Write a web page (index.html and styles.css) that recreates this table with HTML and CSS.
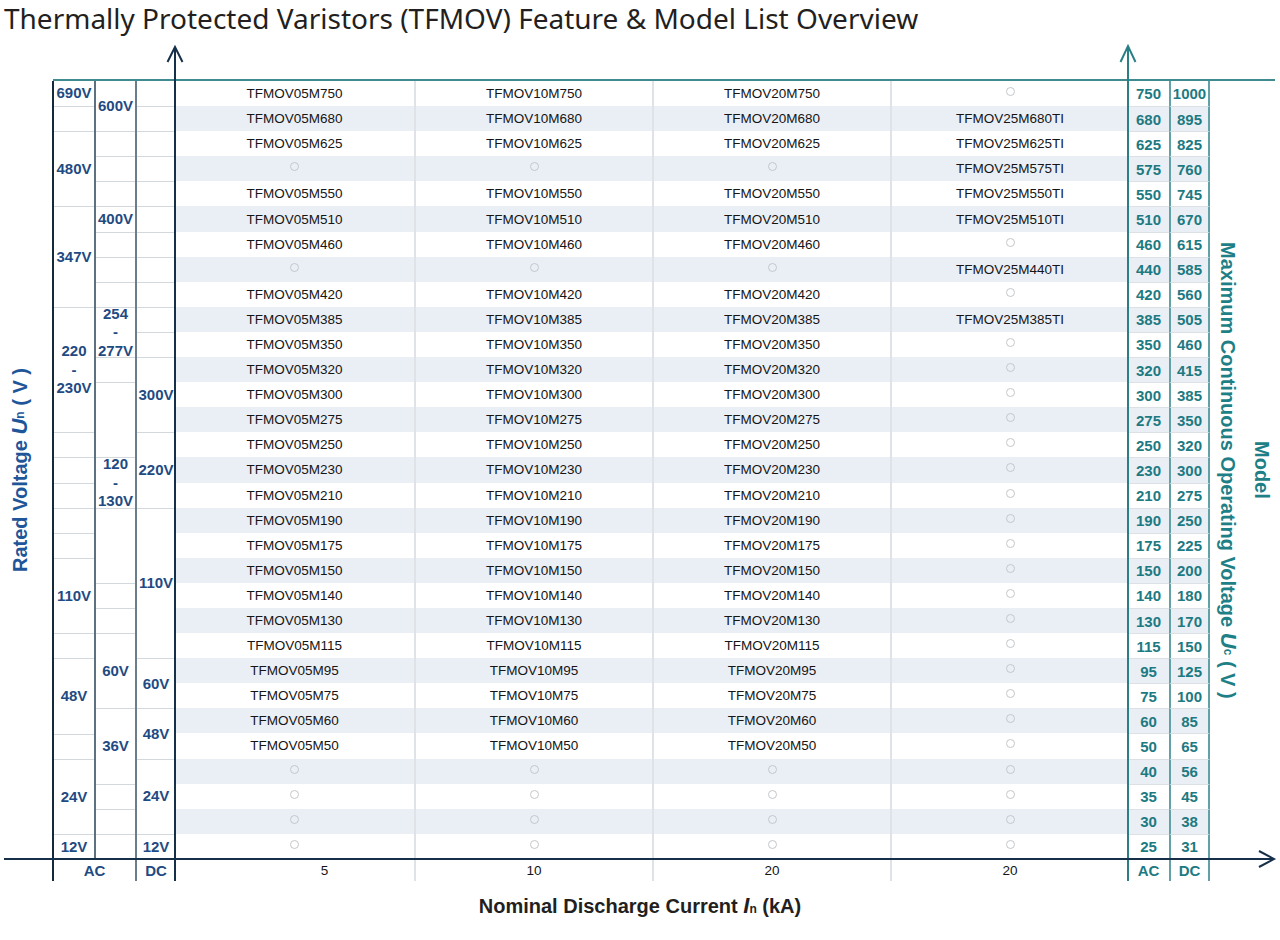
FILE: index.html
```html
<!DOCTYPE html>
<html lang="en">
<head>
<meta charset="utf-8">
<title>TFMOV Feature &amp; Model List Overview</title>
<link rel="stylesheet" href="styles.css">
</head>
<body>
<h1 class="title">Thermally Protected Varistors (TFMOV) Feature &amp; Model List Overview</h1>

<svg class="axes" width="1280" height="940" viewBox="0 0 1280 940" aria-hidden="true">
  <path d="M53 80 H1275" class="ax-top"/>
  <path d="M175 47 V881" class="ax-navy"/>
  <path d="M167.5 62 L175 47 L182.5 62" class="ax-navy"/>
  <path d="M1128 46 V881" class="ax-teal"/>
  <path d="M1120.5 62 L1128 46 L1135.5 62" class="ax-teal"/>
  <path d="M4 859 H1274" class="ax-navy"/>
  <path d="M1259 851 L1274 859 L1259 867" class="ax-navy"/>
</svg>

<div class="chart">
  <div class="side-left">
    <span class="vlabel vlabel-left">Rated Voltage <i class="big">U</i><span class="small">n</span> ( V )</span>
  </div>

  <div class="grid">
    <div class="body">
      <div class="vcol c1">
        <div class="cell s1">690V</div>
        <div class="cell s1"></div>
        <div class="cell s3">480V</div>
        <div class="cell s4">347V</div>
        <div class="cell s5">220<br>-<br>230V</div>
        <div class="cell s1"></div>
        <div class="cell s1"></div>
        <div class="cell s1"></div>
        <div class="cell s1"></div>
        <div class="cell s1"></div>
        <div class="cell s3">110V</div>
        <div class="cell s1"></div>
        <div class="cell s3">48V</div>
        <div class="cell s1"></div>
        <div class="cell s3">24V</div>
        <div class="cell s1">12V</div>
      </div>
      <div class="vcol c2">
        <div class="cell s2">600V</div>
        <div class="cell s1"></div>
        <div class="cell s1"></div>
        <div class="cell s1"></div>
        <div class="cell s1">400V</div>
        <div class="cell s1"></div>
        <div class="cell s1"></div>
        <div class="cell s1"></div>
        <div class="cell s2">254<br>-<br>277V</div>
        <div class="cell s1"></div>
        <div class="cell s3"></div>
        <div class="cell s2">120<br>-<br>130V</div>
        <div class="cell s3"></div>
        <div class="cell s1"></div>
        <div class="cell s1"></div>
        <div class="cell s3">60V</div>
        <div class="cell s3">36V</div>
        <div class="cell s1"></div>
        <div class="cell s1"></div>
        <div class="cell s1"></div>
      </div>
      <div class="vcol c3">
        <div class="cell s1"></div>
        <div class="cell s1"></div>
        <div class="cell s1"></div>
        <div class="cell s1"></div>
        <div class="cell s1"></div>
        <div class="cell s1"></div>
        <div class="cell s1"></div>
        <div class="cell s1"></div>
        <div class="cell s1"></div>
        <div class="cell s1"></div>
        <div class="cell s1"></div>
        <div class="cell s3">300V</div>
        <div class="cell s3">220V</div>
        <div class="cell s6">110V</div>
        <div class="cell s2">60V</div>
        <div class="cell s2">48V</div>
        <div class="cell s3">24V</div>
        <div class="cell s1">12V</div>
      </div>

      <div class="rows">
        <div class="row"><div class="m">TFMOV05M750</div><div class="m">TFMOV10M750</div><div class="m">TFMOV20M750</div><div class="m"><span class="o"></span></div><div class="u">750</div><div class="u u2">1000</div></div>
        <div class="row"><div class="m">TFMOV05M680</div><div class="m">TFMOV10M680</div><div class="m">TFMOV20M680</div><div class="m">TFMOV25M680TI</div><div class="u">680</div><div class="u u2">895</div></div>
        <div class="row"><div class="m">TFMOV05M625</div><div class="m">TFMOV10M625</div><div class="m">TFMOV20M625</div><div class="m">TFMOV25M625TI</div><div class="u">625</div><div class="u u2">825</div></div>
        <div class="row"><div class="m"><span class="o"></span></div><div class="m"><span class="o"></span></div><div class="m"><span class="o"></span></div><div class="m">TFMOV25M575TI</div><div class="u">575</div><div class="u u2">760</div></div>
        <div class="row"><div class="m">TFMOV05M550</div><div class="m">TFMOV10M550</div><div class="m">TFMOV20M550</div><div class="m">TFMOV25M550TI</div><div class="u">550</div><div class="u u2">745</div></div>
        <div class="row"><div class="m">TFMOV05M510</div><div class="m">TFMOV10M510</div><div class="m">TFMOV20M510</div><div class="m">TFMOV25M510TI</div><div class="u">510</div><div class="u u2">670</div></div>
        <div class="row"><div class="m">TFMOV05M460</div><div class="m">TFMOV10M460</div><div class="m">TFMOV20M460</div><div class="m"><span class="o"></span></div><div class="u">460</div><div class="u u2">615</div></div>
        <div class="row"><div class="m"><span class="o"></span></div><div class="m"><span class="o"></span></div><div class="m"><span class="o"></span></div><div class="m">TFMOV25M440TI</div><div class="u">440</div><div class="u u2">585</div></div>
        <div class="row"><div class="m">TFMOV05M420</div><div class="m">TFMOV10M420</div><div class="m">TFMOV20M420</div><div class="m"><span class="o"></span></div><div class="u">420</div><div class="u u2">560</div></div>
        <div class="row"><div class="m">TFMOV05M385</div><div class="m">TFMOV10M385</div><div class="m">TFMOV20M385</div><div class="m">TFMOV25M385TI</div><div class="u">385</div><div class="u u2">505</div></div>
        <div class="row"><div class="m">TFMOV05M350</div><div class="m">TFMOV10M350</div><div class="m">TFMOV20M350</div><div class="m"><span class="o"></span></div><div class="u">350</div><div class="u u2">460</div></div>
        <div class="row"><div class="m">TFMOV05M320</div><div class="m">TFMOV10M320</div><div class="m">TFMOV20M320</div><div class="m"><span class="o"></span></div><div class="u">320</div><div class="u u2">415</div></div>
        <div class="row"><div class="m">TFMOV05M300</div><div class="m">TFMOV10M300</div><div class="m">TFMOV20M300</div><div class="m"><span class="o"></span></div><div class="u">300</div><div class="u u2">385</div></div>
        <div class="row"><div class="m">TFMOV05M275</div><div class="m">TFMOV10M275</div><div class="m">TFMOV20M275</div><div class="m"><span class="o"></span></div><div class="u">275</div><div class="u u2">350</div></div>
        <div class="row"><div class="m">TFMOV05M250</div><div class="m">TFMOV10M250</div><div class="m">TFMOV20M250</div><div class="m"><span class="o"></span></div><div class="u">250</div><div class="u u2">320</div></div>
        <div class="row"><div class="m">TFMOV05M230</div><div class="m">TFMOV10M230</div><div class="m">TFMOV20M230</div><div class="m"><span class="o"></span></div><div class="u">230</div><div class="u u2">300</div></div>
        <div class="row"><div class="m">TFMOV05M210</div><div class="m">TFMOV10M210</div><div class="m">TFMOV20M210</div><div class="m"><span class="o"></span></div><div class="u">210</div><div class="u u2">275</div></div>
        <div class="row"><div class="m">TFMOV05M190</div><div class="m">TFMOV10M190</div><div class="m">TFMOV20M190</div><div class="m"><span class="o"></span></div><div class="u">190</div><div class="u u2">250</div></div>
        <div class="row"><div class="m">TFMOV05M175</div><div class="m">TFMOV10M175</div><div class="m">TFMOV20M175</div><div class="m"><span class="o"></span></div><div class="u">175</div><div class="u u2">225</div></div>
        <div class="row"><div class="m">TFMOV05M150</div><div class="m">TFMOV10M150</div><div class="m">TFMOV20M150</div><div class="m"><span class="o"></span></div><div class="u">150</div><div class="u u2">200</div></div>
        <div class="row"><div class="m">TFMOV05M140</div><div class="m">TFMOV10M140</div><div class="m">TFMOV20M140</div><div class="m"><span class="o"></span></div><div class="u">140</div><div class="u u2">180</div></div>
        <div class="row"><div class="m">TFMOV05M130</div><div class="m">TFMOV10M130</div><div class="m">TFMOV20M130</div><div class="m"><span class="o"></span></div><div class="u">130</div><div class="u u2">170</div></div>
        <div class="row"><div class="m">TFMOV05M115</div><div class="m">TFMOV10M115</div><div class="m">TFMOV20M115</div><div class="m"><span class="o"></span></div><div class="u">115</div><div class="u u2">150</div></div>
        <div class="row"><div class="m">TFMOV05M95</div><div class="m">TFMOV10M95</div><div class="m">TFMOV20M95</div><div class="m"><span class="o"></span></div><div class="u">95</div><div class="u u2">125</div></div>
        <div class="row"><div class="m">TFMOV05M75</div><div class="m">TFMOV10M75</div><div class="m">TFMOV20M75</div><div class="m"><span class="o"></span></div><div class="u">75</div><div class="u u2">100</div></div>
        <div class="row"><div class="m">TFMOV05M60</div><div class="m">TFMOV10M60</div><div class="m">TFMOV20M60</div><div class="m"><span class="o"></span></div><div class="u">60</div><div class="u u2">85</div></div>
        <div class="row"><div class="m">TFMOV05M50</div><div class="m">TFMOV10M50</div><div class="m">TFMOV20M50</div><div class="m"><span class="o"></span></div><div class="u">50</div><div class="u u2">65</div></div>
        <div class="row"><div class="m"><span class="o"></span></div><div class="m"><span class="o"></span></div><div class="m"><span class="o"></span></div><div class="m"><span class="o"></span></div><div class="u">40</div><div class="u u2">56</div></div>
        <div class="row"><div class="m"><span class="o"></span></div><div class="m"><span class="o"></span></div><div class="m"><span class="o"></span></div><div class="m"><span class="o"></span></div><div class="u">35</div><div class="u u2">45</div></div>
        <div class="row"><div class="m"><span class="o"></span></div><div class="m"><span class="o"></span></div><div class="m"><span class="o"></span></div><div class="m"><span class="o"></span></div><div class="u">30</div><div class="u u2">38</div></div>
        <div class="row"><div class="m"><span class="o"></span></div><div class="m"><span class="o"></span></div><div class="m"><span class="o"></span></div><div class="m"><span class="o"></span></div><div class="u">25</div><div class="u u2">31</div></div>
      </div>
    </div>

    <div class="foot">
      <div class="f f-ac">AC</div>
      <div class="f f-dc">DC</div>
      <div class="f f-m1">5</div>
      <div class="f f-m">10</div>
      <div class="f f-m">20</div>
      <div class="f f-m">20</div>
      <div class="f f-u">AC</div>
      <div class="f f-u f-u2">DC</div>
    </div>
  </div>

  <div class="side-right">
    <span class="vlabel teal">Maximum Continuous Operating Voltage <i class="big">U</i><span class="small">c</span> ( V )</span>
    <span class="vlabel teal">Model</span>
  </div>
</div>

<div class="xlabel">Nominal Discharge Current <i class="big">I</i><span class="small">n</span> (kA)</div>
</body>
</html>
```

FILE: styles.css
```css
* { box-sizing: border-box; }
html, body { margin: 0; padding: 0; }
body {
  width: 1280px;
  height: 940px;
  position: relative;
  overflow: hidden;
  background: #ffffff;
  font-family: "Liberation Sans", Arial, sans-serif;
}

.title {
  margin: 0;
  height: 80px;
  padding-left: 4px;
  font-family: "Noto Sans", "Open Sans", sans-serif;
  font-weight: 400;
  font-size: 28px;
  line-height: 36px;
  color: #231f20;
  white-space: nowrap;
}

.axes {
  position: absolute;
  left: 0;
  top: 0;
  pointer-events: none;
  z-index: 2;
}
.axes path { fill: none; stroke-width: 2; }
.ax-top { stroke: #3f8b90; }
.ax-navy { stroke: #17304a; }
.ax-teal { stroke: #2a7f86; }

.chart {
  display: flex;
  align-items: flex-start;
}

.side-left {
  width: 52px;
  height: 779px;
  padding-top: 1px;
  padding-left: 9px;
  display: flex;
  align-items: center;
}
.side-right {
  width: 70px;
  height: 779px;
  padding-top: 1px;
  padding-left: 7px;
  display: flex;
  align-items: center;
  gap: 12px;
}

.vlabel {
  writing-mode: vertical-rl;
  font-weight: 700;
  font-size: 20px;
  line-height: 22px;
  white-space: nowrap;
}
.vlabel-left {
  transform: rotate(180deg);
  color: #1f5699;
}
.teal { color: #1f7f86; }
.big { font-style: italic; font-size: 22px; line-height: 22px; }
.small { font-size: 12px; line-height: 22px; }

.grid { width: 1158px; }
.body { display: flex; padding-top: 1px; }

.vcol { display: flex; flex-direction: column; }
.c1 { width: 42px; border-left: 2px solid #15293d; }
.c2 { width: 41px; border-left: 2px solid #5e7181; }
.c3 { width: 40px; border-left: 2px solid #6b7c8b; }

.cell {
  display: flex;
  align-items: center;
  justify-content: center;
  text-align: center;
  font-weight: 700;
  font-size: 15px;
  line-height: 18.5px;
  color: #1f4b82;
  border-top: 1px solid #d3d8dc;
}
.cell:first-child { border-top: 0; }
.s1 { height: 25.1px; }
.s2 { height: 50.2px; }
.s3 { height: 75.3px; }
.s4 { height: 100.4px; }
.s5 { height: 125.5px; }
.s6 { height: 150.6px; }

.rows { width: 1035px; display: flex; flex-direction: column; }
.row {
  display: grid;
  grid-template-columns: 239px 238px 238px 238px 41px 41px;
  height: 25.1px;
}
.row:nth-child(even) { background: #eaeff5; }

.m {
  display: flex;
  align-items: center;
  justify-content: center;
  font-size: 13.5px;
  color: #151515;
}
.m + .m { border-left: 2px solid #dfe2e6; }

.o {
  display: inline-block;
  width: 9px;
  height: 9px;
  margin-top: -4px;
  border: 1px solid #c4c8cc;
  border-radius: 50%;
}

.u {
  display: flex;
  align-items: center;
  justify-content: center;
  font-weight: 700;
  font-size: 15px;
  color: #1d7a82;
}
.row + .row .u { border-top: 1px solid #dce1e6; }
.u2 {
  border-left: 2px solid #62a1a6;
  border-right: 2px solid #62a1a6;
}

.foot { display: flex; height: 22px; }
.f {
  display: flex;
  align-items: center;
  justify-content: center;
  font-size: 13.5px;
  color: #151515;
}
.f-ac {
  width: 83px;
  border-left: 2px solid #15293d;
  font-weight: 700;
  font-size: 15px;
  color: #1f4b82;
}
.f-dc {
  width: 40px;
  border-left: 2px solid #6b7c8b;
  font-weight: 700;
  font-size: 15px;
  color: #1f4b82;
}
.f-m1 { width: 239px; padding-left: 60px; }
.f-m { width: 238px; border-left: 2px solid #dfe2e6; }
.f-u {
  width: 41px;
  font-weight: 700;
  font-size: 15px;
  color: #1d7a82;
}
.f-u2 {
  border-left: 2px solid #62a1a6;
  border-right: 2px solid #62a1a6;
}

.xlabel {
  margin-top: 14px;
  text-align: center;
  font-weight: 700;
  font-size: 20px;
  line-height: 23px;
  color: #231f20;
}
```
